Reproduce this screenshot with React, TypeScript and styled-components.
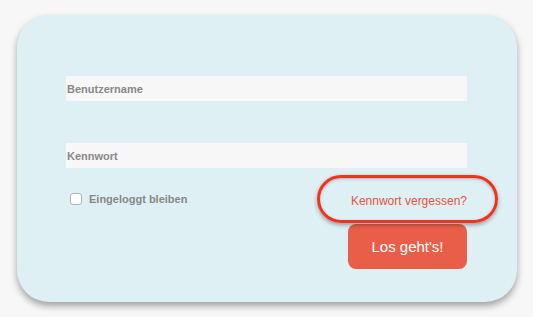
import React, { useState } from "react";
import styled, { createGlobalStyle } from "styled-components";

const GlobalStyle = createGlobalStyle`
  html, body {
    margin: 0;
    padding: 0;
    background: #f7f7f7;
    font-family: "Liberation Sans", Arial, sans-serif;
  }
`;

const Page = styled.div`
  padding: 15px 16px 15px 17px;
`;

const Card = styled.form`
  width: 500px;
  height: 287px;
  box-sizing: border-box;
  background: #dff0f4;
  border-radius: 32px;
  box-shadow: 0 4px 7px rgba(0, 0, 0, 0.35);
  padding: 61px 50px 0 49px;
  display: flex;
  flex-direction: column;
`;

const Field = styled.input<{ $gap?: number }>`
  display: block;
  width: 401px;
  height: 25px;
  box-sizing: border-box;
  border: none;
  outline: none;
  background: #f7f7f7;
  padding: 0 1px;
  margin-top: ${(p) => p.$gap ?? 0}px;
  font-family: "Liberation Sans", Arial, sans-serif;
  font-size: 11px;
  font-weight: bold;
  color: #555;
  &::placeholder {
    color: #888;
  }
`;

const OptionsRow = styled.div`
  width: 401px;
  display: flex;
  align-items: center;
  justify-content: space-between;
  margin-top: 14px;
  height: 34px;
`;

const Remember = styled.label`
  display: flex;
  align-items: center;
  gap: 7px;
  padding-left: 4px;
  font-size: 11px;
  font-weight: bold;
  color: #888;
`;

const Box = styled.span<{ $on: boolean }>`
  width: 12px;
  height: 12px;
  box-sizing: border-box;
  border: 1px solid #b5b5b5;
  border-radius: 3px;
  background: ${(p) => (p.$on ? "#e85e48" : "#fff")};
`;

const Forgot = styled.a`
  position: relative;
  font-size: 12px;
  color: #e8543d;
  text-decoration: none;
  margin-top: 4px;
  &::after {
    content: "";
    position: absolute;
    left: -34px;
    right: -31px;
    top: -19px;
    bottom: -15px;
    border: 3px solid #f2321f;
    border-radius: 24px;
    box-shadow: 0 2px 4px rgba(0, 0, 0, 0.35), inset 0 1px 3px rgba(0, 0, 0, 0.25);
    pointer-events: none;
  }
`;

const Actions = styled.div`
  width: 401px;
  display: flex;
  justify-content: flex-end;
  margin-top: 8px;
`;

const Submit = styled.button`
  width: 119px;
  height: 45px;
  border: none;
  border-radius: 8px;
  background: #e85e48;
  color: #fff;
  font-family: "Liberation Sans", Arial, sans-serif;
  font-size: 15px;
  cursor: pointer;
`;

const App = () => {
  const [remember, setRemember] = useState(false);
  return (
    <>
      <GlobalStyle />
      <Page>
        <Card onSubmit={(e) => e.preventDefault()}>
          <Field placeholder="Benutzername" />
          <Field $gap={42} type="password" placeholder="Kennwort" />
          <OptionsRow>
            <Remember onClick={() => setRemember((r) => !r)}>
              <Box $on={remember} />
              Eingeloggt bleiben
            </Remember>
            <Forgot href="#">Kennwort vergessen?</Forgot>
          </OptionsRow>
          <Actions>
            <Submit type="submit">Los geht's!</Submit>
          </Actions>
        </Card>
      </Page>
    </>
  );
};

export default App;
